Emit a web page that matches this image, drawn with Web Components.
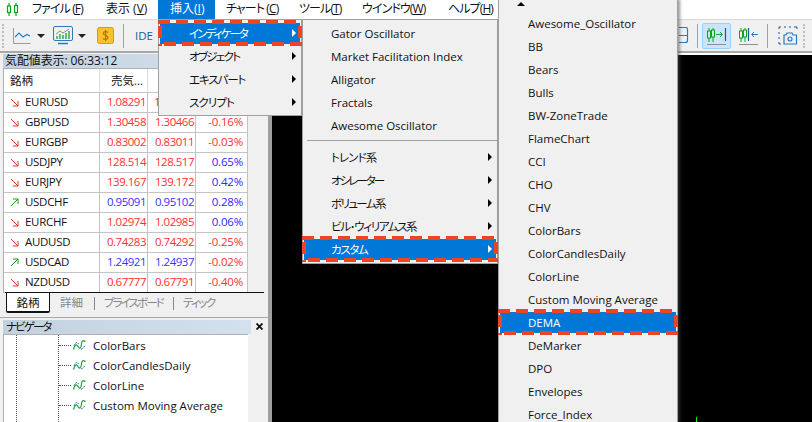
<!DOCTYPE html>
<html>
<head>
<meta charset="utf-8">
<title>MetaTrader</title>
<style>
html, body { margin: 0; padding: 0; background: #000; overflow: hidden; }
body { width: 812px; height: 422px; font-family: "Open Sans", "Noto Sans CJK JP", sans-serif; font-size: 11.5px; color: #111; }
</style>
</head>
<body>
<mt-app>
  <mt-menubar slot="menubar">
    <mt-menu-title w="106" pad="32" ls="-.9">ファイル (<u>F</u>)</mt-menu-title>
    <mt-menu-title w="52" pad="0" ls="0">表示 (<u>V</u>)</mt-menu-title>
    <mt-menu-title w="57" pad="12" ls="0" active>挿入(<u>I</u>)</mt-menu-title>
    <mt-menu-title w="73" pad="11" ls="-.9">チャート (<u>C</u>)</mt-menu-title>
    <mt-menu-title w="63" pad="11" ls="-.9">ツール(<u>T</u>)</mt-menu-title>
    <mt-menu-title w="86" pad="11" ls="-.9">ウインドウ(<u>W</u>)</mt-menu-title>
    <mt-menu-title w="60" pad="11" ls="-.9">ヘルプ(<u>H</u>)</mt-menu-title>
  </mt-menubar>
  <mt-toolbar slot="toolbar"></mt-toolbar>
  <mt-side slot="side">
    <mt-quotes>
      <mt-quote sym="EURUSD" bid="1.08291" ask="1.0" chg="" dir="down" clip></mt-quote>
      <mt-quote sym="GBPUSD" bid="1.30458" ask="1.30466" chg="-0.16%" dir="down"></mt-quote>
      <mt-quote sym="EURGBP" bid="0.83002" ask="0.83011" chg="-0.03%" dir="down"></mt-quote>
      <mt-quote sym="USDJPY" bid="128.514" ask="128.517" chg="0.65%" dir="down"></mt-quote>
      <mt-quote sym="EURJPY" bid="139.167" ask="139.172" chg="0.42%" dir="down"></mt-quote>
      <mt-quote sym="USDCHF" bid="0.95091" ask="0.95102" chg="0.28%" dir="up"></mt-quote>
      <mt-quote sym="EURCHF" bid="1.02974" ask="1.02985" chg="0.06%" dir="down"></mt-quote>
      <mt-quote sym="AUDUSD" bid="0.74283" ask="0.74292" chg="-0.25%" dir="down"></mt-quote>
      <mt-quote sym="USDCAD" bid="1.24921" ask="1.24937" chg="-0.02%" dir="up"></mt-quote>
      <mt-quote sym="NZDUSD" bid="0.67777" ask="0.67791" chg="-0.40%" dir="down"></mt-quote>
    </mt-quotes>
    <mt-navigator>
      <mt-nav-item>ColorBars</mt-nav-item>
      <mt-nav-item>ColorCandlesDaily</mt-nav-item>
      <mt-nav-item>ColorLine</mt-nav-item>
      <mt-nav-item>Custom Moving Average</mt-nav-item>
    </mt-navigator>
  </mt-side>
  <mt-chart slot="chart"></mt-chart>

  <mt-menu slot="overlay" x="158" y="19" w="144" h="97" top="1.5">
    <mt-item pad="30" ls="-1.9" arrow active marked>インディケータ</mt-item>
    <mt-item pad="30" ls="-1.7" arrow>オブジェクト</mt-item>
    <mt-item pad="30" ls="-1.1" arrow>エキスパート</mt-item>
    <mt-item pad="30" ls="-.9" arrow>スクリプト</mt-item>
  </mt-menu>
  <mt-menu slot="overlay" x="302" y="19" w="196" h="245" top="1.5">
    <mt-item pad="28">Gator Oscillator</mt-item>
    <mt-item pad="28">Market Facilitation Index</mt-item>
    <mt-item pad="28">Alligator</mt-item>
    <mt-item pad="28">Fractals</mt-item>
    <mt-item pad="28">Awesome Oscillator</mt-item>
    <mt-menu-sep></mt-menu-sep>
    <mt-item pad="28" ls="-.9" arrow>トレンド系</mt-item>
    <mt-item pad="28" ls="-2" arrow>オシレーター</mt-item>
    <mt-item pad="28" ls="-1.6" arrow>ボリューム系</mt-item>
    <mt-item pad="28" ls="-1.3" arrow>ビル･ウィリアムス系</mt-item>
    <mt-item pad="28" ls="-1.4" arrow active marked>カスタム</mt-item>
  </mt-menu>
  <mt-menu slot="overlay" x="498" y="-1" w="180" h="424" top="1.5" shadow>
    <mt-scroll-up></mt-scroll-up>
    <mt-item pad="29">Awesome_Oscillator</mt-item>
    <mt-item pad="29">BB</mt-item>
    <mt-item pad="29">Bears</mt-item>
    <mt-item pad="29">Bulls</mt-item>
    <mt-item pad="29">BW-ZoneTrade</mt-item>
    <mt-item pad="29">FlameChart</mt-item>
    <mt-item pad="29">CCI</mt-item>
    <mt-item pad="29">CHO</mt-item>
    <mt-item pad="29">CHV</mt-item>
    <mt-item pad="29">ColorBars</mt-item>
    <mt-item pad="29">ColorCandlesDaily</mt-item>
    <mt-item pad="29">ColorLine</mt-item>
    <mt-item pad="29">Custom Moving Average</mt-item>
    <mt-item pad="29" active marked>DEMA</mt-item>
    <mt-item pad="29">DeMarker</mt-item>
    <mt-item pad="29">DPO</mt-item>
    <mt-item pad="29">Envelopes</mt-item>
    <mt-item pad="29">Force_Index</mt-item>
  </mt-menu>
</mt-app>

<script>
class MtApp extends HTMLElement {
  constructor() {
    super();
    this.shadow = this.attachShadow({ mode: 'open' });
  }
  connectedCallback() {
    this.shadow.innerHTML = `
      <style>
        :host { display: flex; flex-direction: column; position: relative; width: 812px; height: 422px; overflow: hidden; background: #000; }
        .main { flex: 1; display: flex; min-height: 0; }
      </style>
      <slot name="menubar"></slot>
      <slot name="toolbar"></slot>
      <div class="main">
        <slot name="side"></slot>
        <slot name="chart"></slot>
      </div>
      <slot name="overlay"></slot>
    `;
  }
}
customElements.define('mt-app', MtApp);

class MtMenubar extends HTMLElement {
  constructor() {
    super();
    this.attachShadow({ mode: 'open' }).innerHTML = `
      <style>
        :host { display: flex; height: 19px; background: #fff; border-bottom: 1px solid #d8d8d8; flex: none; }
        svg { position: absolute; left: 6px; top: 3px; }
        .items { display: flex; }
      </style>
      <svg width="13" height="13" viewBox="0 0 13 13" fill="none" stroke="#0aa51e" stroke-width="1.2">
        <rect x="1.5" y="3" width="3" height="6.5"/><path d="M3 0v3M3 9.500v3.500"/>
        <rect x="8.500" y="2.500" width="3" height="7"/><path d="M10 0v2.500M10 9.500v3.500"/>
      </svg>
      <div class="items"><slot></slot></div>
    `;
  }
}
customElements.define('mt-menubar', MtMenubar);

class MtMenuTitle extends HTMLElement {
  constructor() {
    super();
    const on = this.hasAttribute('active');
    this.attachShadow({ mode: 'open' }).innerHTML = `
      <style>
        :host { display: block; box-sizing: border-box; width: ${this.getAttribute('w')}px; padding-left: ${this.getAttribute('pad')}px; font-size: 12px; line-height: 18px; height: 19px; letter-spacing: ${this.getAttribute('ls')}px; font-feature-settings: "palt"; white-space: nowrap;
          ${on ? 'background:#0078d7;color:#fff;' : ''} }
      </style>
      <slot></slot>
    `;
  }
}
customElements.define('mt-menu-title', MtMenuTitle);

class MtToolbar extends HTMLElement {
  constructor() {
    super();
    this.attachShadow({ mode: 'open' }).innerHTML = `
      <style>
        :host { display: flex; align-items: center; height: 31px; background: #f0f0f0; border-bottom: 2px solid #a8a8a8; flex: none; position: relative; padding-left: 2px; }
        .grip { width: 2px; height: 24px; border-left: 2px dotted #bdbdbd; margin-right: 7px; }
        .caret { width: 0; height: 0; border: 4px solid transparent; border-top: 4px solid #222; border-bottom: 0; }
        .sep { width: 1px; height: 24px; background: #a0a0a0; }
        .ide { color: #0b5fa5; font-size: 11.500px; margin: 0 0 0 11px; font-family: "Open Sans", sans-serif; }
        svg { display: block; flex: none; }
        .right { position: absolute; left: 678px; top: 0; width: 134px; height: 31px; display: flex; align-items: center; }
        .on { width: 29px; height: 26px; box-sizing: border-box; background: #cce4f7; border: 1px solid #99d1ff; border-radius: 2px; display: flex; align-items: center; justify-content: center; }
        .plain { width: 29px; height: 26px; display: flex; align-items: center; justify-content: center; }
      </style>
      <div class="grip"></div>
      <svg width="18" height="16" viewBox="0 0 18 16" fill="none"><path d="M.5 0v15.500h17" stroke="#9a9a9a"/><path d="M2 9l4-4 4 4 4-2.500 3 1.500" stroke="#2b79c2" stroke-width="1.100"/></svg>
      <div class="caret" style="margin:0 8px 0 6px"></div>
      <svg width="20" height="19" viewBox="0 0 20 19" fill="none"><rect x=".5" y=".5" width="19" height="14" rx="1.500" stroke="#2b79c2"/><path d="M3 8l4-3 3 2 6-4" stroke="#8a8a8a"/><path d="M4 13V10M7 13V8M10 13V9M13 13V7M16 13V5" stroke="#18a02c" stroke-width="1.300"/><path d="M5 17.500h10" stroke="#2b79c2" stroke-width="1.500"/></svg>
      <div class="caret" style="margin:0 11px 0 5px"></div>
      <svg width="17" height="17" viewBox="0 0 17 17"><rect x=".5" y=".5" width="16" height="16" rx="2" fill="#fbc02d" stroke="#d99a10"/><path d="M11 5.500C10 4.500 6.500 4 6.300 6.200 6.200 8.600 11 8 11 10.700 10.800 13 7 12.500 6 11.500M8.600 3v11" fill="none" stroke="#a9780a" stroke-width="1.200"/></svg>
      <div class="sep" style="margin-left:9px"></div>
      <div class="ide">IDE</div>
      <div class="right">
        <svg width="10" height="17" viewBox="0 0 10 17" fill="none" style="margin-left:1px"><path d="M0 .5h6.500a2 2 0 0 1 2 2v11a2 2 0 0 1-2 2H0M0 8.500h8.500" stroke="#2b79c2" stroke-width="1.200"/></svg>
        <div class="sep" style="margin-left:8px;margin-right:4px"></div>
        <div class="on">
          <svg width="22" height="20" viewBox="0 0 22 20" fill="none"><path d="M3 2v14M7 2v14" stroke="#0aa51e"/><rect x="1.500" y="5" width="3" height="7" fill="#cce4f7" stroke="#0aa51e"/><rect x="5.500" y="4" width="3" height="7" fill="#cce4f7" stroke="#0aa51e"/><path d="M10 8.500h6M14 6l2.500 2.500L14 11" stroke="#1aa040"/><path d="M19.500 2v13" stroke="#0b5fa5" stroke-width="1.200"/><path d="M1 18.500h19" stroke="#909090"/></svg>
        </div>
        <div class="plain" style="margin-left:3px">
          <svg width="22" height="20" viewBox="0 0 22 20" fill="none"><path d="M3 2v14M7 2v14" stroke="#0aa51e"/><rect x="1.500" y="5" width="3" height="7" fill="#f0f0f0" stroke="#0aa51e"/><rect x="5.500" y="4" width="3" height="7" fill="#f0f0f0" stroke="#0aa51e"/><path d="M10.500 2v13" stroke="#0b5fa5" stroke-width="1.200"/><path d="M20 8.500h-6M16 6l-2.500 2.500L16 11" stroke="#2b79c2"/><path d="M1 18.500h19" stroke="#909090"/></svg>
        </div>
        <div class="sep" style="margin-left:4px"></div>
        <svg width="20" height="19" viewBox="0 0 20 19" fill="none" style="margin-left:10px"><path d="M1 3V1h2M6 1h2M11 1h2M16 1h3v2M1 6v2M1 11v2M1 16v2h2" stroke="#0b5fa5"/><path d="M6 9h2l1-2h5l1 2h3.500v9H6z" stroke="#2b79c2" stroke-width="1.200"/><circle cx="12" cy="13" r="2" stroke="#2b79c2" stroke-width="1.200"/></svg>
        <div class="grip" style="margin:0 0 0 5px"></div>
      </div>
    `;
  }
}
customElements.define('mt-toolbar', MtToolbar);

class MtSide extends HTMLElement {
  constructor() {
    super();
    this.attachShadow({ mode: 'open' }).innerHTML = `
      <style>
        :host { display: flex; flex-direction: column; width: 268px; background: #f0f0f0; flex: none; border-right: 4px solid #a0a0a0; overflow: hidden; }
      </style>
      <slot></slot>
    `;
  }
}
customElements.define('mt-side', MtSide);

class MtQuotes extends HTMLElement {
  constructor() {
    super();
    this.attachShadow({ mode: 'open' }).innerHTML = `
      <style>
        :host { display: block; flex: none; height: 263px; padding-top: 1px; border-bottom: 1px solid #a8a8a8; position: relative; }
        .title { height: 14px; line-height: 14px; margin-left: 3px; width: 248px; padding-left: 2px; box-sizing: border-box; background: linear-gradient(90deg, #c3d1df, #d3e1ef); white-space: nowrap; font-size: 12px; letter-spacing: -.1px; }
        .table { margin-left: 3px; width: 245px; background: #fff; border-left: 1px solid #b0b0b0; box-sizing: border-box; border-top: 1px solid #b0b0b0; }
        .head { display: grid; grid-template-columns: 96px 48px 48px 52px; height: 23px; line-height: 23px; border-bottom: 1px solid #c4c4c4; }
        .head div { border-right: 1px solid #dcdcdc; }
        .head div:first-child { padding-left: 6px; }
        .head div:nth-child(2) { padding-left: 11px; box-sizing: border-box; white-space: nowrap; overflow: hidden; }
        .tabs { display: flex; align-items: flex-start; height: 22px; margin: -1px 4px 0 5px; border-top: 1px solid #111; color: #868686; position: relative; }
        .tab { line-height: 20px; white-space: nowrap; }
        .tab.on { width: 44px; height: 20px; box-sizing: border-box; margin-left: 1px; text-align: center; background: #fff; border: 1px solid #111; border-top: 0; border-bottom-width: 2px; border-radius: 0 0 2px 2px; color: #111; }
        .bar { width: 1px; height: 13px; background: #888; margin-top: 4px; }
        .kana { font-feature-settings: "palt"; }
      </style>
      <div class="title">気配値表示: 06:33:12</div>
      <div class="table">
        <div class="head"><div>銘柄</div><div>売気...</div><div></div><div></div></div>
        <slot></slot>
      </div>
      <div class="tabs">
        <div class="tab on">銘柄</div>
        <div class="tab" style="margin-left:10px">詳細</div>
        <div class="bar" style="margin-left:11px"></div>
        <div class="tab kana" style="margin-left:9px;letter-spacing:-1.9px">プライスボード</div>
        <div class="bar" style="margin-left:10px"></div>
        <div class="tab kana" style="margin-left:9px;letter-spacing:-1.6px">ティック</div>
      </div>
    `;
  }
}
customElements.define('mt-quotes', MtQuotes);

class MtQuote extends HTMLElement {
  constructor() {
    super();
    const up = this.getAttribute('dir') === 'up';
    const chg = this.getAttribute('chg');
    const priceCol = up ? '#3636ff' : '#ff3030';
    const chgCol = chg.startsWith('-') ? '#ff3030' : '#2a2aff';
    const arrow = up
      ? '<path d="M1 8L8 1M3 1h5v5" stroke="#12a012"/>'
      : '<path d="M1 1l7 7M8 3v5H3" stroke="#e0342c"/>';
    // the first row's ask is cut by the open menu, only its first digit shows
    const askStyle = this.hasAttribute('clip') ? 'text-align:left;padding-left:6px;padding-right:0;' : '';
    this.attachShadow({ mode: 'open' }).innerHTML = `
      <style>
        :host { display: grid; grid-template-columns: 96px 48px 48px 52px; height: 20px; line-height: 18px; box-sizing: border-box; border-bottom: 1px solid #c4c4c4; }
        div { border-right: 1px solid #c4c4c4; text-align: right; padding-right: 1px; letter-spacing: -.5px; }
        .sym { text-align: left; padding: 0 0 0 21px; position: relative; letter-spacing: -.3px; }
        svg { position: absolute; left: 6px; top: 5px; }
        .chg { padding-right: 4px; color: ${chgCol}; letter-spacing: -.2px; }
        .p { color: ${priceCol}; }
      </style>
      <div class="sym"><svg width="9" height="9" viewBox="0 0 9 9" fill="none">${arrow}</svg>${this.getAttribute('sym')}</div>
      <div class="p">${this.getAttribute('bid')}</div>
      <div class="p" style="${askStyle}">${this.getAttribute('ask')}</div>
      <div class="chg">${chg}</div>
    `;
  }
}
customElements.define('mt-quote', MtQuote);

class MtNavigator extends HTMLElement {
  constructor() {
    super();
    this.attachShadow({ mode: 'open' }).innerHTML = `
      <style>
        :host { display: block; flex: 1; min-height: 0; padding-top: 2px; position: relative; overflow: hidden; }
        .title { height: 14px; line-height: 14px; margin-left: 3px; width: 248px; padding-left: 3px; box-sizing: border-box; background: linear-gradient(90deg, #c3d1df, #d3e1ef); letter-spacing: -1.9px; font-feature-settings: "palt"; }
        .close { position: absolute; left: 256px; top: 5px; width: 7px; height: 7px; }
        .tree { margin-left: 3px; width: 245px; height: 100px; box-sizing: border-box; background: #fff; border-left: 1px solid #b0b0b0; border-top: 1px solid #b0b0b0; position: relative; }
        .v1, .v2 { position: absolute; top: 0; bottom: 0; border-left: 1px dotted #555; }
        .v1 { left: 12px; }
        .v2 { left: 54px; }
      </style>
      <div class="title">ナビゲータ</div>
      <svg class="close" viewBox="0 0 7 7"><path d="M.5.5l6 6M6.500.5l-6 6" stroke="#111" stroke-width="1.800"/></svg>
      <div class="tree"><div class="v1"></div><div class="v2"></div><slot></slot></div>
    `;
  }
}
customElements.define('mt-navigator', MtNavigator);

class MtNavItem extends HTMLElement {
  constructor() {
    super();
    this.attachShadow({ mode: 'open' }).innerHTML = `
      <style>
        :host { display: flex; align-items: center; height: 20px; padding-left: 55px; white-space: nowrap; }
        .dots { width: 12px; border-top: 1px dotted #555; margin-right: 2px; }
        svg { margin-right: 7px; flex: none; }
      </style>
      <div class="dots"></div>
      <svg width="13" height="11" viewBox="0 0 13 11" fill="none"><path d="M.5 9.500C2 4 3.500 4 5 6.500S8 9 8.500 4 11 1 12.500 1.500" stroke="#1f9a3c" stroke-width="1.200"/><path d="M1 6C2.500 2 4 1.500 5.500 4M8 9c1.500 0 3-2 4.500-4" stroke="#2b79c2" stroke-dasharray="2 1"/></svg>
      <slot></slot>
    `;
  }
}
customElements.define('mt-nav-item', MtNavItem);

class MtChart extends HTMLElement {
  constructor() {
    super();
    this.attachShadow({ mode: 'open' }).innerHTML = `
      <style>
        :host { display: block; flex: 1; position: relative; background: #000; border-top: 2px solid #fff; }
        .tick { position: absolute; left: 424px; bottom: 0; width: 1px; height: 5px; background: #00ff00; }
      </style>
      <div class="tick"></div>
    `;
  }
}
customElements.define('mt-chart', MtChart);

class MtMenu extends HTMLElement {
  constructor() {
    super();
    const a = n => this.getAttribute(n);
    this.attachShadow({ mode: 'open' }).innerHTML = `
      <style>
        :host { display: block; position: absolute; left: ${a('x')}px; top: ${a('y')}px; width: ${a('w')}px; height: ${a('h')}px; box-sizing: border-box;
          background: #f0f0f0; border: 1px solid #a0a0a0; padding-top: ${a('top')}px;
          ${this.hasAttribute('shadow') ? 'box-shadow: 2px 0 3px rgba(70,70,70,.55);' : ''} }
      </style>
      <slot></slot>
    `;
  }
}
customElements.define('mt-menu', MtMenu);

class MtItem extends HTMLElement {
  constructor() {
    super();
    const on = this.hasAttribute('active');
    const arrow = this.hasAttribute('arrow');
    const marked = this.hasAttribute('marked');
    const dash = '#ee4426 0 12px, transparent 12px 18px';
    this.attachShadow({ mode: 'open' }).innerHTML = `
      <style>
        :host { display: flex; align-items: center; height: 23px; padding-left: ${this.getAttribute('pad')}px; position: relative; white-space: nowrap; font-feature-settings: "palt"; ${on ? 'color:#fff;' : ''} }
        .bg { position: absolute; left: 1px; right: 1px; top: 1px; bottom: 1px; background: #0078d7; }
        .t { position: relative; letter-spacing: ${this.getAttribute('ls') || 0}px; }
        .arrow { position: absolute; right: 5px; top: 7.500px; width: 0; height: 0; border-left: 4px solid ${on ? '#fff' : '#000'}; border-top: 4px solid transparent; border-bottom: 4px solid transparent; }
        .mark { position: absolute; left: -1px; right: -1px; top: -2px; bottom: -1px; pointer-events: none;
          background:
            repeating-linear-gradient(90deg, ${dash}) 0 0 / 100% 4px no-repeat,
            repeating-linear-gradient(90deg, ${dash}) 6px 100% / 100% 4px no-repeat,
            repeating-linear-gradient(180deg, ${dash}) 0 6px / 4px 100% no-repeat,
            repeating-linear-gradient(180deg, ${dash}) 100% 6px / 4px 100% no-repeat; }
      </style>
      ${on ? '<div class="bg"></div>' : ''}
      <span class="t"><slot></slot></span>
      ${arrow ? '<div class="arrow"></div>' : ''}
      ${marked ? '<div class="mark"></div>' : ''}
    `;
  }
}
customElements.define('mt-item', MtItem);

class MtMenuSep extends HTMLElement {
  constructor() {
    super();
    this.attachShadow({ mode: 'open' }).innerHTML = `
      <style>:host { display: block; height: 1px; margin: 3.500px 0 4.500px 4px; background: #a0a0a0; }</style>
    `;
  }
}
customElements.define('mt-menu-sep', MtMenuSep);

class MtScrollUp extends HTMLElement {
  constructor() {
    super();
    this.attachShadow({ mode: 'open' }).innerHTML = `
      <style>
        :host { display: block; height: 10px; position: relative; }
        div { position: absolute; left: 18px; top: 0; width: 0; height: 0; border-left: 4.500px solid transparent; border-right: 4.500px solid transparent; border-bottom: 4.500px solid #000; }
      </style>
      <div></div>
    `;
  }
}
customElements.define('mt-scroll-up', MtScrollUp);
</script>
</body>
</html>
